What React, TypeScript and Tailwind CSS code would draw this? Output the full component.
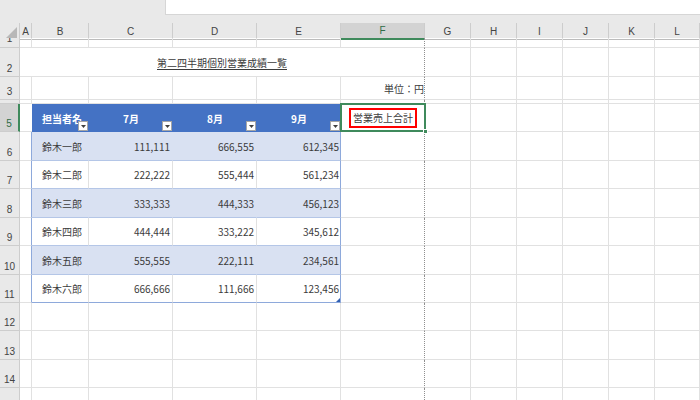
import React from 'react';

const rowGrid = 'grid grid-cols-[20px_12px_57px_84px_84px_84px_84px_46px_46px_46px_46px_46px_45px]';
const cell = 'border-r border-b border-[#e1e1e1]';
const fCell = 'border-b border-[#e1e1e1] border-r border-r-[#8f8f8f] [border-right-style:dotted]';
const head = "flex items-end justify-center pb-[1px] overflow-hidden bg-[#e9e9e9] border-b border-r border-[#cdcdcd] text-[10px] leading-[12px] text-[#444] font-['Liberation_Sans',sans-serif]";
const headActive = "flex items-end justify-center pb-[1px] overflow-hidden bg-[#d3d3d3] border-b border-[#cdcdcd] border-r-2 border-r-[#3f8a5c] text-[10px] leading-[12px] text-[#2f6b46] font-['Liberation_Sans',sans-serif]";

const letters = ['A', 'B', 'C', 'D', 'E', 'F', 'G', 'H', 'I', 'J', 'K', 'L'];

interface Rec {
  name: string;
  jul: string;
  aug: string;
  sep: string;
}

const data: Rec[] = [
  { name: '鈴木一郎', jul: '111,111', aug: '666,555', sep: '612,345' },
  { name: '鈴木二郎', jul: '222,222', aug: '555,444', sep: '561,234' },
  { name: '鈴木三郎', jul: '333,333', aug: '444,333', sep: '456,123' },
  { name: '鈴木四郎', jul: '444,444', aug: '333,222', sep: '345,612' },
  { name: '鈴木五郎', jul: '555,555', aug: '222,111', sep: '234,561' },
  { name: '鈴木六郎', jul: '666,666', aug: '111,666', sep: '123,456' },
];

const dataHeights = ['h-[29px]', 'h-[28px]', 'h-[29px]', 'h-[28px]', 'h-[29px]', 'h-[28px]'];

// columns G..L
function Tail() {
  return (
    <>
      {[0, 1, 2, 3, 4, 5].map(i => (
        <div key={i} className={cell} />
      ))}
    </>
  );
}

function BlankRow({ n, h }: { n: string; h: string }) {
  return (
    <div className={`${rowGrid} ${h}`}>
      <div className={head}>{n}</div>
      <div className={cell} />
      <div className={cell} />
      <div className={cell} />
      <div className={cell} />
      <div className={cell} />
      <div className={fCell} />
      <Tail />
    </div>
  );
}

function FilterButton() {
  return (
    <span className="absolute right-[1px] bottom-[1px] flex h-[10px] w-[10px] items-center justify-center border border-[#a6a6a6] bg-white">
      <svg width="5" height="3" viewBox="0 0 5 3">
        <path d="M0 0h5L2.5 3z" fill="#404040" />
      </svg>
    </span>
  );
}

export default function App() {
  return (
    <div className="h-[400px] w-[700px] overflow-hidden bg-white font-['Noto_Sans_CJK_JP','Noto_Sans',sans-serif] text-[10px] text-[#3b3b3b]">
      {/* formula bar strip */}
      <div className="flex h-[23px] bg-[#e9e9e9]">
        <div className="ml-[165px] h-[15px] flex-1 border-b border-l border-[#d6d6d6] bg-white" />
      </div>

      {/* column letters */}
      <div className={`${rowGrid} h-[15px] bg-[#e9e9e9] text-[10px] text-[#444] font-['Liberation_Sans',sans-serif]`}>
        <div className="flex items-end justify-end pr-[2px] border-r border-b border-[#cdcdcd] border-b-[#bcbcbc]">
          <svg width="12" height="12" viewBox="0 0 12 12">
            <path d="M12 0V12H0z" fill="#b8b8b8" />
          </svg>
        </div>
        {letters.map(l =>
          l === 'F' ? (
            <div key={l} className="flex items-center justify-center bg-[#d3d3d3] border-b-2 border-[#3f8a5c] border-r border-r-[#cdcdcd] text-[#2f6b46]">
              F
            </div>
          ) : (
            <div key={l} className="flex items-center justify-center border-r border-b border-[#cdcdcd] border-b-[#bcbcbc]">
              {l}
            </div>
          )
        )}
      </div>

      {/* row 1 */}
      <div className={`${rowGrid} h-[10px]`}>
        <div className="flex items-start justify-center overflow-hidden bg-[#e9e9e9] border-b border-r border-[#cdcdcd] text-[10px] leading-[12px] text-[#444] font-['Liberation_Sans',sans-serif]">
          <span className="-mt-[5px]">1</span>
        </div>
        <div className={cell} />
        <div className={cell} />
        <div className={cell} />
        <div className={cell} />
        <div className={cell} />
        <div className={fCell} />
        <Tail />
      </div>

      {/* row 2 - title */}
      <div className={`${rowGrid} h-[29px]`}>
        <div className={head}>2</div>
        <div className="col-span-6 flex items-center justify-center border-b border-[#e1e1e1] border-r border-r-[#8f8f8f] [border-right-style:dotted]">
          <span className="underline underline-offset-2">第二四半期個別営業成績一覧</span>
        </div>
        <Tail />
      </div>

      {/* row 3 - unit */}
      <div className={`${rowGrid} h-[23px]`}>
        <div className={head}>3</div>
        <div className={cell} />
        <div className={cell} />
        <div className={cell} />
        <div className={cell} />
        <div className={cell} />
        <div className={`${fCell} flex items-center justify-end`}>単位：円</div>
        <Tail />
      </div>

      {/* row 4 hidden */}
      <div className={`${rowGrid} h-[4px]`}>
        <div className="border-b border-r border-[#cdcdcd] bg-[#e9e9e9]" />
        <div className={cell} />
        <div className={cell} />
        <div className={cell} />
        <div className={cell} />
        <div className={cell} />
        <div className={fCell} />
        <Tail />
      </div>

      {/* row 5 - table header */}
      <div className={`${rowGrid} h-[28px]`}>
        <div className={headActive}>5</div>
        <div className="border-b border-[#e1e1e1]" />
        <div className="relative flex items-center bg-[#4472c4] pl-[10px] font-bold text-white">
          担当者名
          <FilterButton />
        </div>
        <div className="relative flex items-center justify-center bg-[#4472c4] font-bold text-white">
          7月
          <FilterButton />
        </div>
        <div className="relative flex items-center justify-center bg-[#4472c4] font-bold text-white">
          8月
          <FilterButton />
        </div>
        <div className="relative flex items-center justify-center bg-[#4472c4] font-bold text-white">
          9月
          <FilterButton />
        </div>
        <div className="relative flex items-center justify-center border-b border-[#e1e1e1]">
          <span className="flex h-[20px] items-center border-2 border-[#ff0000] px-[2px] text-[#404040]">営業売上合計</span>
          <span className="pointer-events-none absolute -inset-[1px] border-2 border-[#3f8a5c]" />
          <span className="absolute -right-[3px] -bottom-[3px] h-[5px] w-[5px] border border-white bg-[#3f8a5c]" />
        </div>
        <Tail />
      </div>

      {/* data rows */}
      {data.map((r, i) => {
        const band = i % 2 === 0;
        const last = i === data.length - 1;
        const inner = band
          ? 'bg-[#d9e1f2] border-b border-r border-[#b4c6e7] border-r-[#d9e1f2]'
          : 'bg-white border-b border-r border-[#b4c6e7] border-r-[#e1e1e1]';
        const bottom = last ? 'border-b-[#8ea9db]' : '';
        const edge = band
          ? 'bg-[#d9e1f2] border-b border-r border-[#b4c6e7] border-r-[#8ea9db]'
          : 'bg-white border-b border-r border-[#b4c6e7] border-r-[#8ea9db]';
        return (
          <div key={r.name} className={`${rowGrid} ${dataHeights[i]}`}>
            <div className={head}>{String(i + 6)}</div>
            <div className="border-b border-[#e1e1e1] border-r border-r-[#8ea9db]" />
            <div className={`${inner} ${bottom} flex items-center pl-[10px]`}>{r.name}</div>
            <div className={`${inner} ${bottom} flex items-center justify-end pr-[2px]`}>{r.jul}</div>
            <div className={`${inner} ${bottom} flex items-center justify-end pr-[2px]`}>{r.aug}</div>
            <div className={`${edge} ${bottom} relative flex items-center justify-end pr-[1px]`}>
              {r.sep}
              {last && (
                <svg className="absolute right-0 bottom-0" width="4" height="4" viewBox="0 0 4 4">
                  <path d="M4 0V4H0z" fill="#2f5fb3" />
                </svg>
              )}
            </div>
            <div className={fCell} />
            <Tail />
          </div>
        );
      })}

      <BlankRow n="12" h="h-[28px]" />
      <BlankRow n="13" h="h-[29px]" />
      <BlankRow n="14" h="h-[28px]" />
      <BlankRow n="15" h="h-[28px]" />
    </div>
  );
}
